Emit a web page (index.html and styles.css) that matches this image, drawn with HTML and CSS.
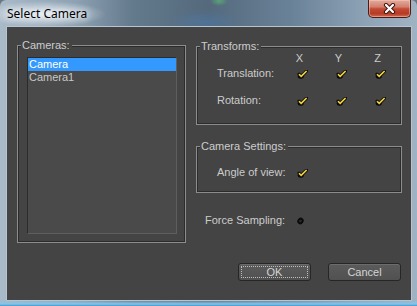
FILE: index.html
```
<!DOCTYPE html>
<html lang="en">
<head>
    <meta charset="UTF-8">
    <title>Select Camera</title>
    <link rel="stylesheet" href="styles.css">
</head>
<body>
    <svg class="defs" width="0" height="0">
        <symbol id="check" viewBox="0 0 11 9">
            <ellipse cx="3.8" cy="6.2" rx="3.1" ry="2.5" fill="#0b0b0b"/>
            <path d="M2 4.2 L4.2 6.4 L9.6 1" fill="none" stroke="#111" stroke-width="3.2" stroke-linecap="round"/>
            <path d="M2 4.2 L4.2 6.4 L9.6 1" fill="none" stroke="#f4d53a" stroke-width="1.6"/>
        </symbol>
    </svg>

    <div class="window">
        <div class="titlebar">
            <span class="title">Select Camera</span>
            <button class="close" title="Close">
                <svg width="13" height="11" viewBox="0 0 13 11">
                    <path d="M3 2 L10 9 M10 2 L3 9" stroke="#40170f" stroke-width="4.2" stroke-linecap="round"/>
                    <path d="M3 2 L10 9 M10 2 L3 9" stroke="#fff" stroke-width="2.2" stroke-linecap="round"/>
                </svg>
            </button>
        </div>

        <div class="client">
            <fieldset class="group cameras">
                <legend>Cameras:</legend>
                <ul class="listbox">
                    <li class="selected">Camera</li>
                    <li>Camera1</li>
                </ul>
            </fieldset>

            <div class="side">
                <fieldset class="group transforms">
                    <legend>Transforms:</legend>
                    <div class="grid">
                        <span></span>
                        <span class="axis">X</span>
                        <span class="axis">Y</span>
                        <span class="axis">Z</span>

                        <span class="label">Translation:</span>
                        <span class="cell"><svg class="tick"><use href="#check"/></svg></span>
                        <span class="cell"><svg class="tick"><use href="#check"/></svg></span>
                        <span class="cell"><svg class="tick"><use href="#check"/></svg></span>

                        <span class="label">Rotation:</span>
                        <span class="cell"><svg class="tick"><use href="#check"/></svg></span>
                        <span class="cell"><svg class="tick"><use href="#check"/></svg></span>
                        <span class="cell"><svg class="tick"><use href="#check"/></svg></span>
                    </div>
                </fieldset>

                <fieldset class="group settings">
                    <legend>Camera Settings:</legend>
                    <div class="grid single">
                        <span class="label">Angle of view:</span>
                        <span class="cell"><svg class="tick"><use href="#check"/></svg></span>
                    </div>
                </fieldset>

                <div class="force">
                    <span class="force-label">Force Sampling:</span>
                    <svg class="dot" width="7" height="8" viewBox="0 0 7 8">
                        <ellipse cx="3.5" cy="4" rx="3" ry="3.4" transform="rotate(35 3.5 4)" fill="#0a0a0a"/>
                        <ellipse cx="3.4" cy="4" rx="1.2" ry="1.5" transform="rotate(35 3.5 4)" fill="#2a2a2a"/>
                    </svg>
                </div>

                <div class="buttons">
                    <button class="btn default">OK</button>
                    <button class="btn">Cancel</button>
                </div>
            </div>
        </div>
    </div>
</body>
</html>
```
FILE: styles.css
```
* {
    box-sizing: border-box;
}
body {
    margin: 0;
    background-color: #6b7680;
    font-family: "Liberation Sans", Arial, sans-serif;
}
.defs {
    position: absolute;
}
.window {
    width: 417px;
    height: 306px;
    border-radius: 6px 6px 0 0;
    display: flex;
    flex-direction: column;
    background:
        linear-gradient(to top, #3d9bd6 0, #86c3e6 2px, rgba(140, 190, 220, 0) 6px),
        radial-gradient(ellipse 62px 13px at 44px 14px, rgba(236, 242, 248, 0.9), rgba(236, 242, 248, 0)),
        radial-gradient(ellipse 9px 5px at 219px 1px, rgba(90, 200, 110, 0.6), rgba(90, 200, 110, 0)),
        radial-gradient(ellipse 36px 12px at 205px 22px, rgba(70, 130, 200, 0.35), rgba(70, 130, 200, 0)),
        linear-gradient(90deg, #a9bac8 0%, #8ea2b3 18%, #63798c 32%, #54697c 50%, #6a8298 70%, #8ea3b6 88%, #a0b3c3 100%);
}
.titlebar {
    height: 26px;
    display: flex;
    justify-content: space-between;
    align-items: flex-start;
    padding: 0 6px 0 7px;
}
.title {
    font-family: "Noto Sans", "Open Sans", sans-serif;
    font-size: 12px;
    line-height: 16px;
    padding-top: 6px;
    color: #000;
    text-shadow: 0 0 6px #fff, 0 0 10px rgba(255, 255, 255, 0.8);
}
.close {
    width: 43px;
    height: 18px;
    padding: 0;
    border: 1px solid #4a1e16;
    border-top: none;
    border-radius: 0 0 5px 5px;
    display: flex;
    align-items: center;
    justify-content: center;
    background: linear-gradient(#e3ab9c 0%, #d38070 40%, #c24a33 52%, #b73b25 80%, #cf6a52 100%);
    box-shadow: inset 0 0 0 1px rgba(255, 210, 200, 0.45);
}
.close svg {
    display: block;
}
.client {
    margin: 0 5px 0 6px;
    height: 275px;
    border: 1px solid #b8c5d1;
    background-color: #444444;
    display: flex;
    padding: 12px 9px 0 10px;
    gap: 10px;
    color: #cccccc;
    font-size: 11px;
    line-height: 13px;
}
.group {
    margin: 0;
    min-width: 0;
    border: 1px solid #8c8c8c;
    box-shadow: inset 1px 1px 0 #2c2c2c, inset -1px -1px 0 #2c2c2c;
    padding: 0 0 0 3px;
}
.group legend {
    padding: 0 2px 0 1px;
    background-color: #444444;
}
.cameras {
    width: 169px;
    align-self: flex-start;
    padding: 0 8px 8px 3px;
}
.listbox {
    list-style: none;
    margin: 5px 0 0 6px;
    padding: 0;
    width: 150px;
    height: 177px;
    background-color: #4a4a4a;
    border: 1px solid;
    border-color: #2b2b2b #5e5e5e #5e5e5e #2b2b2b;
}
.listbox li {
    padding-left: 1px;
    height: 13px;
    color: #c8c8c8;
}
.listbox li.selected {
    background-color: #3399ff;
    color: #ffffff;
}
.side {
    width: 206px;
    display: flex;
    flex-direction: column;
    margin-top: 1px;
}
.transforms {
    padding-bottom: 17px;
}
.grid {
    display: grid;
    grid-template-columns: 62px 39px 39px 39px;
    grid-template-rows: 15px 27px 13px;
    margin: -1px 0 0 17px;
}
.grid.single {
    grid-template-rows: 13px;
    margin-top: 13px;
}
.axis {
    text-align: center;
    padding-left: 2px;
}
.label {
    white-space: nowrap;
}
.tick {
    display: block;
    width: 11px;
    height: 9px;
    margin: 3px 0 0 18px;
}
.settings {
    margin-top: 15px;
    padding-bottom: 13px;
}
.force {
    display: flex;
    margin-top: 21px;
    padding-left: 9px;
    height: 13px;
}
.force-label {
    width: 92px;
}
.dot {
    display: block;
    margin-top: 3px;
}
.buttons {
    display: flex;
    justify-content: flex-end;
    gap: 17px;
    margin-top: 36px;
    padding-right: 1px;
}
.btn {
    width: 73px;
    height: 18px;
    padding: 0;
    font-family: "Liberation Sans", Arial, sans-serif;
    font-size: 11px;
    color: #d4d4d4;
    border: 1px solid #262626;
    border-radius: 3px;
    background: linear-gradient(#5b5b5b, #515151);
    box-shadow: inset 0 1px 0 #6c6c6c;
}
.btn.default {
    outline: 1px dotted #bdbdbd;
    outline-offset: -4px;
}
```
